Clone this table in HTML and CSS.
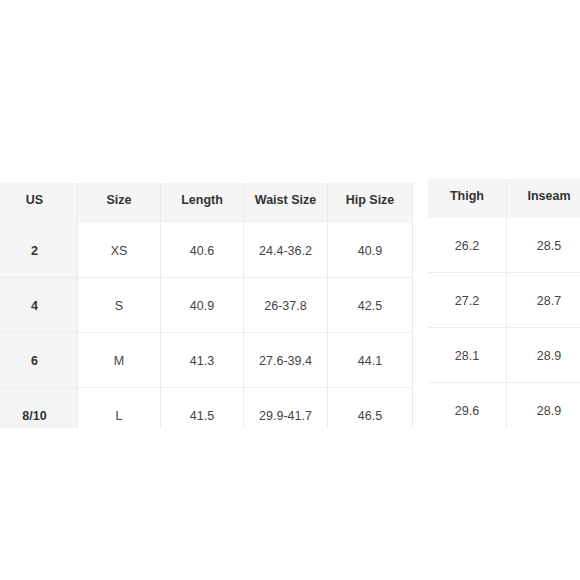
FILE: index.html
```html
<!DOCTYPE html>
<html>
<head>
<meta charset="utf-8">
<link rel="stylesheet" href="styles.css">
</head>
<body>
<div class="chart">
  <div class="table main">
    <div class="cell head key">US</div>
    <div class="cell head">Size</div>
    <div class="cell head">Length</div>
    <div class="cell head">Waist Size</div>
    <div class="cell head">Hip Size</div>

    <div class="cell key">2</div>
    <div class="cell">XS</div>
    <div class="cell">40.6</div>
    <div class="cell">24.4-36.2</div>
    <div class="cell">40.9</div>

    <div class="cell key">4</div>
    <div class="cell">S</div>
    <div class="cell">40.9</div>
    <div class="cell">26-37.8</div>
    <div class="cell">42.5</div>

    <div class="cell key">6</div>
    <div class="cell">M</div>
    <div class="cell">41.3</div>
    <div class="cell">27.6-39.4</div>
    <div class="cell">44.1</div>

    <div class="cell key">8/10</div>
    <div class="cell">L</div>
    <div class="cell">41.5</div>
    <div class="cell">29.9-41.7</div>
    <div class="cell">46.5</div>
  </div>

  <div class="table extra">
    <div class="cell head">Thigh</div>
    <div class="cell head">Inseam</div>

    <div class="cell">26.2</div>
    <div class="cell">28.5</div>

    <div class="cell">27.2</div>
    <div class="cell">28.7</div>

    <div class="cell">28.1</div>
    <div class="cell">28.9</div>

    <div class="cell">29.6</div>
    <div class="cell">28.9</div>
  </div>
</div>
</body>
</html>
```

FILE: styles.css
```css
html, body {
  margin: 0;
  padding: 0;
  background: #ffffff;
}

body {
  font-family: "Liberation Sans", Arial, sans-serif;
  font-size: 12.5px;
  color: #444444;
  width: 580px;
  height: 580px;
  overflow: hidden;
}

.chart {
  display: flex;
  align-items: flex-start;
  box-sizing: border-box;
  padding-top: 179px;
  height: 428px;
  overflow: hidden;
  margin-left: -8px;
}

.table {
  display: grid;
  flex: none;
}

.main {
  margin-top: 4px;
  grid-template-columns: 86px 83px 83px 84px 84px;
  grid-auto-rows: 55px;
  grid-template-rows: 40px;
  border-right: 1px solid #e9e9e9;
}

.extra {
  margin-left: 15px;
  grid-template-columns: 79px 84px;
  grid-auto-rows: 55px;
  grid-template-rows: 39px;
}

.cell {
  box-sizing: border-box;
  display: flex;
  align-items: center;
  justify-content: center;
  padding-top: 1px;
  border-right: 1px solid #ececec;
  border-bottom: 1px solid #ececec;
  line-height: 16px;
  white-space: nowrap;
}

.main .cell:nth-child(5n) {
  border-right: none;
}

.extra .cell:nth-child(2n) {
  border-right: none;
}

.head {
  align-items: flex-start;
  padding-top: 9px;
  background: #f5f5f5;
  font-weight: bold;
  color: #333333;
  border-bottom: none;
}

.key {
  background: #f5f5f5;
  font-weight: bold;
  color: #333333;
}
```
